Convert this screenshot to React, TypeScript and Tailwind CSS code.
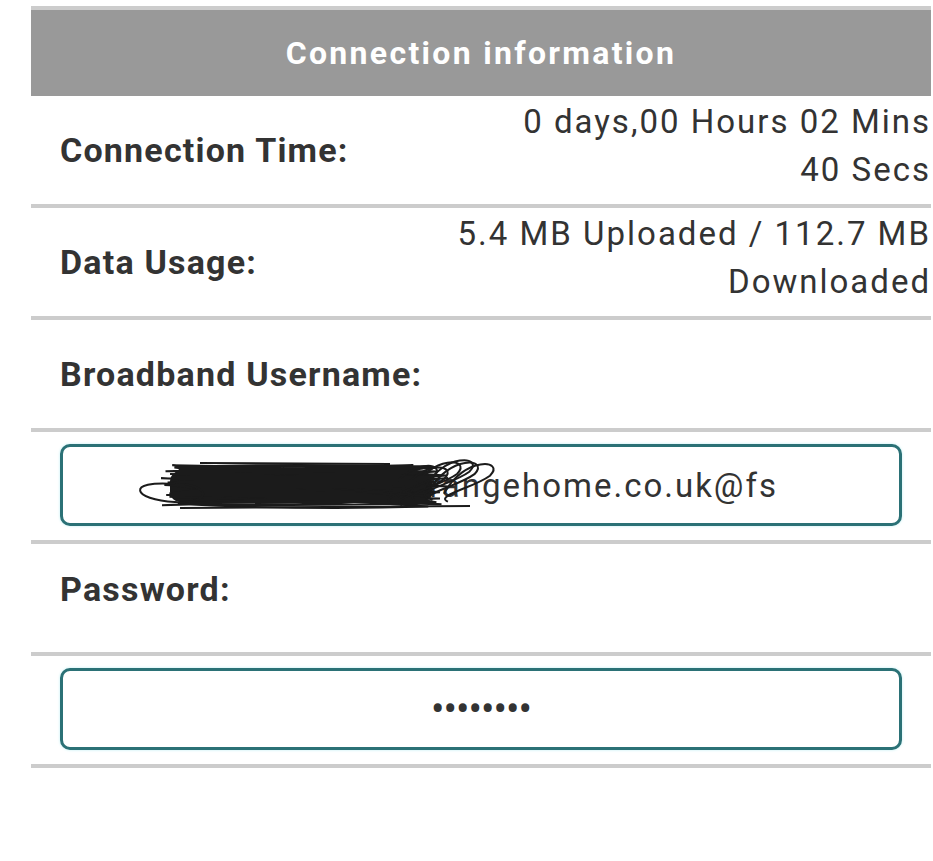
import React from "react";

function seeded(seed: number) {
  let s = seed;
  return () => {
    s = (s * 9301 + 49297) % 233280;
    return s / 233280;
  };
}

function Scribble() {
  const rnd = seeded(7);
  let d = "";
  let x = 110;
  let y = 30;
  d += `M ${x} ${y}`;
  for (let i = 0; i < 70; i++) {
    const nx = i % 2 === 0 ? 350 + rnd() * 40 : 100 + rnd() * 40;
    const ny = 20 + rnd() * 44;
    const cx = (x + nx) / 2;
    const cy = (y + ny) / 2 + (rnd() - 0.5) * 14;
    d += ` Q ${cx.toFixed(1)} ${cy.toFixed(1)} ${nx.toFixed(1)} ${ny.toFixed(1)}`;
    x = nx;
    y = ny;
  }
  const loops: string[] = [];
  for (let i = 0; i < 6; i++) {
    const lx = 325 + i * 10 + rnd() * 10;
    const ly = 20 + rnd() * 10;
    loops.push(
      `M ${lx} ${ly + 24} C ${lx + 20} ${ly - 14}, ${lx + 62} ${ly - 10}, ${lx + 46} ${ly + 6} C ${lx + 30} ${ly + 18}, ${lx - 10} ${ly + 26}, ${lx + 4} ${ly + 32}`
    );
  }
  loops.push("M 115 40 C 65 36, 72 56, 115 58 C 145 60, 155 46, 125 40");
  return (
    <svg
      className="pointer-events-none absolute left-0 top-0"
      width="842"
      height="82"
      viewBox="0 0 842 82"
    >
      <rect x="110" y="27" width="262" height="31" rx="10" fill="#1b1b1b" />
      <path d={d} fill="none" stroke="#1b1b1b" strokeWidth="2" />
      {loops.map((l, i) => (
        <path key={i} d={l} fill="none" stroke="#1b1b1b" strokeWidth="2" />
      ))}
      <line x1="120" y1="64" x2="410" y2="62" stroke="#1b1b1b" strokeWidth="2" />
      <line x1="140" y1="19" x2="330" y2="20" stroke="#1b1b1b" strokeWidth="2" />
    </svg>
  );
}

function Sep() {
  return <div className="h-[4px] bg-[#cccccc]" />;
}

function LabelRow({
  label,
  value,
  shift,
}: {
  label: string;
  value?: React.ReactNode;
  shift?: boolean;
}) {
  return (
    <>
      <div
        className={
          shift
            ? "flex h-[108px] items-center justify-between pb-[18px] pl-[29px]"
            : "flex h-[108px] items-center justify-between pl-[29px]"
        }
      >
        <div className="text-[34px] font-bold tracking-[1.2px] text-[#333333]">{label}</div>
        {value && (
          <div className="pb-[8px] text-right text-[33px] leading-[48px] tracking-[2px] text-[#333333]">
            {value}
          </div>
        )}
      </div>
      <Sep />
    </>
  );
}

export default function App() {
  return (
    <div
      className="min-h-[861px] bg-white pt-[6px]"
      style={{ fontFamily: "Roboto, 'Liberation Sans', sans-serif" }}
    >
      <div className="ml-[31px] w-[900px]">
        <div className="h-[4px] bg-[#cccccc]" />
        <div className="flex h-[86px] items-center justify-center bg-[#999999] text-[32px] font-bold tracking-[2.3px] text-white">
          Connection information
        </div>
        <LabelRow
          label="Connection Time:"
          value={
            <>
              0 days,00 Hours 02 Mins
              <br />
              40 Secs
            </>
          }
        />
        <LabelRow
          label="Data Usage:"
          value={
            <>
              5.4 MB Uploaded / 112.7 MB
              <br />
              Downloaded
            </>
          }
        />
        <LabelRow label="Broadband Username:" />
        <div className="h-[108px] px-[29px] pt-[12px]">
          <div className="relative h-[82px]">
            <input
              readOnly
              defaultValue="johnson198@orangehome.co.uk@fs"
              className="h-full w-full rounded-[10px] border-[3px] border-[#2b7176] bg-white text-center text-[33px] tracking-[2px] text-[#333333] shadow-[0_0_3px_#bfeff2] outline-none"
            />
            <Scribble />
          </div>
        </div>
        <Sep />
        <LabelRow label="Password:" shift />
        <div className="h-[108px] px-[29px] pt-[12px]">
          <input
            type="password"
            readOnly
            defaultValue="12345678"
            className="h-[82px] w-full rounded-[10px] border-[3px] border-[#2b7176] bg-white text-center text-[40px] tracking-[-1px] text-[#333333] shadow-[0_0_3px_#bfeff2] outline-none"
          />
        </div>
        <Sep />
      </div>
    </div>
  );
}
